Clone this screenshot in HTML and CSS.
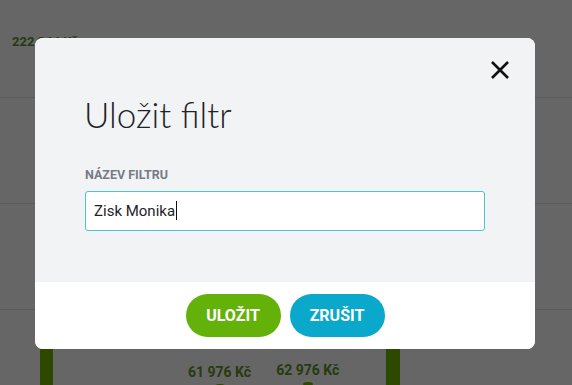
FILE: index.html
```html
<!DOCTYPE html>
<html lang="cs">
<head>
<meta charset="utf-8">
<title>Uložit filtr</title>
<link rel="stylesheet" href="styles.css">
</head>
<body>
<div class="page">
  <div class="row row-top">
    <div class="cell cell-left"><span class="amount">222 344 Kč</span></div>
    <div class="cell cell-right"><span class="amount">224 384 Kč</span></div>
  </div>
  <div class="row row-mid"></div>
  <div class="row row-mid"></div>
  <div class="chart">
    <div class="chart-box">
      <div class="chart-vals">
        <div class="val val-a"><span>61 976 Kč</span><i class="dot"></i></div>
        <div class="val val-b"><span>62 976 Kč</span><i class="dot"></i></div>
      </div>
    </div>
  </div>
</div>

<div class="overlay">
  <div class="modal">
    <button class="close" aria-label="Zavřít">
      <svg width="20" height="20" viewBox="0 0 20 20"><path d="M2 2 L18 18 M18 2 L2 18" stroke="#111" stroke-width="2.6" fill="none"/></svg>
    </button>
    <div class="modal-body">
      <h1 class="title">Uložit filtr</h1>
      <label class="label">NÁZEV FILTRU</label>
      <div class="field">Zisk Monika<span class="caret"></span></div>
    </div>
    <div class="modal-foot">
      <button class="btn btn-save">ULOŽIT</button>
      <button class="btn btn-cancel">ZRUŠIT</button>
    </div>
  </div>
</div>
</body>
</html>
```

FILE: styles.css
```css
html, body {
  margin: 0;
  padding: 0;
}
body {
  width: 572px;
  height: 385px;
  overflow: hidden;
  background: #fff;
  font-family: Lato, "Noto Sans", sans-serif;
}
.page {
  width: 572px;
  height: 385px;
  display: flex;
  flex-direction: column;
}
.row {
  border-bottom: 1px solid #e4e4e4;
  display: flex;
}
.row-top {
  height: 97px;
}
.row-mid {
  height: 105px;
}
.cell {
  flex: 1;
  padding-top: 30px;
}
.cell-left {
  padding-left: 12px;
}
.cell-right {
  padding-left: 74px;
  padding-top: 35px;
}
.amount {
  font-family: Roboto, sans-serif;
  font-weight: 700;
  font-size: 13px;
  color: #5f9428;
}
.chart {
  flex: 1;
  padding-left: 40px;
}
.chart-box {
  width: 360px;
  box-sizing: border-box;
  height: 100%;
  border-left: 13px solid #72b600;
  border-right: 14px solid #72b600;
  display: flex;
  align-items: flex-end;
}
.chart-vals {
  display: flex;
  gap: 25px;
  padding-left: 135px;
  height: 24px;
  margin-bottom: -3px;
}
.val {
  font-family: Roboto, sans-serif;
  font-weight: 700;
  font-size: 14px;
  color: #5f9428;
  display: flex;
  flex-direction: column;
  align-items: center;
  position: relative;
}
.val-b {
  top: -2px;
}
.dot {
  width: 10px;
  height: 10px;
  border-radius: 50%;
  background: #72b600;
  margin-top: 4px;
}
.overlay {
  position: fixed;
  inset: 0;
  background: rgba(0, 0, 0, 0.6);
  display: flex;
  align-items: center;
  justify-content: center;
}
.modal {
  width: 500px;
  height: 311px;
  border-radius: 8px;
  overflow: hidden;
  background: #fff;
  display: flex;
  flex-direction: column;
  position: relative;
  margin-left: -2px;
  margin-top: 1px;
}
.close {
  position: absolute;
  top: 22px;
  right: 25px;
  width: 20px;
  height: 20px;
  padding: 0;
  border: 0;
  background: none;
  display: flex;
}
.modal-body {
  background: #f2f3f5;
  padding: 56px 50px 0;
  height: 244px;
  box-sizing: border-box;
  display: flex;
  flex-direction: column;
}
.title {
  margin: 0 0 0 -1px;
  font-family: Lato, sans-serif;
  font-weight: 300;
  font-size: 35px;
  line-height: 40px;
  color: #1f2328;
}
.label {
  margin-top: 33px;
  font-family: Roboto, sans-serif;
  font-weight: 700;
  font-size: 12.5px;
  line-height: 16px;
  color: #767b86;
}
.field {
  margin-top: 8px;
  height: 40px;
  box-sizing: border-box;
  border: 1px solid #4cc3cf;
  border-radius: 3px;
  background: #fff;
  padding-left: 8px;
  display: flex;
  align-items: center;
  font-family: Roboto, sans-serif;
  font-size: 15px;
  color: #1f2328;
}
.caret {
  width: 1px;
  height: 19px;
  background: #111;
  margin-left: 1px;
}
.modal-foot {
  flex: 1;
  display: flex;
  justify-content: center;
  align-items: center;
  gap: 9px;
  background: #fff;
}
.btn {
  width: 95px;
  height: 43px;
  border: 0;
  border-radius: 22px;
  font-family: Roboto, sans-serif;
  font-weight: 700;
  font-size: 16px;
  color: #fff;
  padding: 0;
}
.btn-save {
  background: #64b10a;
}
.btn-cancel {
  background: #0aa8ca;
}
```
